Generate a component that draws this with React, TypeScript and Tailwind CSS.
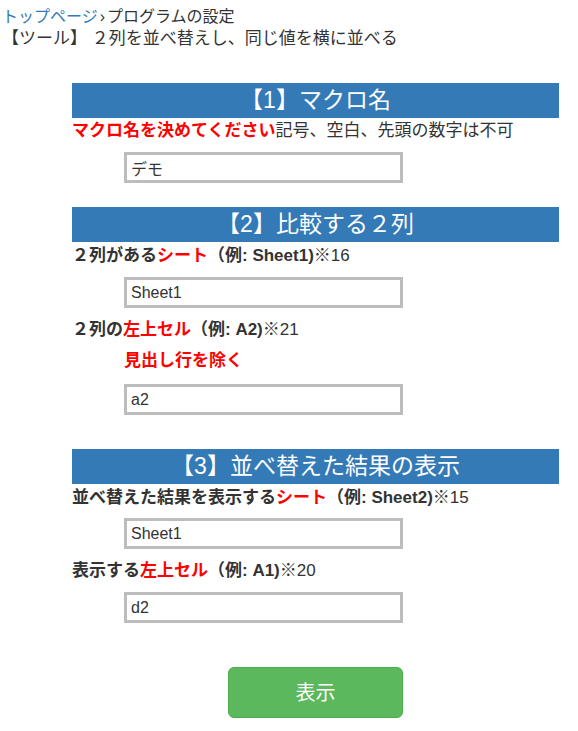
import React from 'react';

const font = { fontFamily: '"Liberation Sans", "Noto Sans CJK JP", sans-serif' };

function SectionHeader({ children }: { children: React.ReactNode }) {
  return (
    <div className="h-[35px] bg-[#337ab7] text-white text-[23px] leading-[35px] text-center">
      {children}
    </div>
  );
}

function Field({ value }: { value: string }) {
  return (
    <div className="pl-[52px]">
      <input
        defaultValue={value}
        className="w-[279px] h-[31px] border-[3px] border-[#bdbdbd] bg-white px-[4px] text-[16px] text-[#333] outline-none"
      />
    </div>
  );
}

function Red({ children }: { children: React.ReactNode }) {
  return <span className="text-[#ff0000] font-bold">{children}</span>;
}

export default function App() {
  return (
    <div className="w-[578px] min-h-[731px] bg-white text-[#333] text-[17px]" style={font}>
      <div className="px-[2px] pt-[6px] leading-[22px]">
        <div className="text-[16px]">
          <a className="text-[#337ab7]">トップページ</a>
          <span className="mx-[2px]">›</span>
          プログラムの設定
        </div>
        <div>【ツール】 ２列を並べ替えし、同じ値を横に並べる</div>
      </div>

      <div className="ml-[72px] w-[487px] mt-[33px]">
        <SectionHeader>【1】マクロ名</SectionHeader>
        <div className="mt-[2px] leading-[22px]">
          <Red>マクロ名を決めてください</Red>記号、空白、先頭の数字は不可
        </div>
        <div className="mt-[10px]">
          <Field value="デモ" />
        </div>

        <div className="mt-[24px]">
          <SectionHeader>【2】比較する２列</SectionHeader>
        </div>
        <div className="mt-[3px] leading-[22px] font-bold">
          ２列がある<Red>シート</Red>（例: Sheet1)<span className="font-normal">※16</span>
        </div>
        <div className="mt-[10px]">
          <Field value="Sheet1" />
        </div>
        <div className="mt-[11px] leading-[22px] font-bold">
          ２列の<Red>左上セル</Red>（例: A2)<span className="font-normal">※21</span>
        </div>
        <div className="mt-[9px] pl-[52px] leading-[22px]">
          <Red>見出し行を除く</Red>
        </div>
        <div className="mt-[12px]">
          <Field value="a2" />
        </div>

        <div className="mt-[34px]">
          <SectionHeader>【3】並べ替えた結果の表示</SectionHeader>
        </div>
        <div className="mt-[3px] leading-[22px] font-bold">
          並べ替えた結果を表示する<Red>シート</Red>（例: Sheet2)<span className="font-normal">※15</span>
        </div>
        <div className="mt-[9px]">
          <Field value="Sheet1" />
        </div>
        <div className="mt-[11px] leading-[22px] font-bold">
          表示する<Red>左上セル</Red>（例: A1)<span className="font-normal">※20</span>
        </div>
        <div className="mt-[10px]">
          <Field value="d2" />
        </div>

        <div className="mt-[44px] pl-[156px]">
          <button className="w-[175px] h-[51px] rounded-[6px] bg-[#5cb85c] border border-[#4cae4c] text-white text-[20px]">
            表示
          </button>
        </div>
      </div>
    </div>
  );
}
